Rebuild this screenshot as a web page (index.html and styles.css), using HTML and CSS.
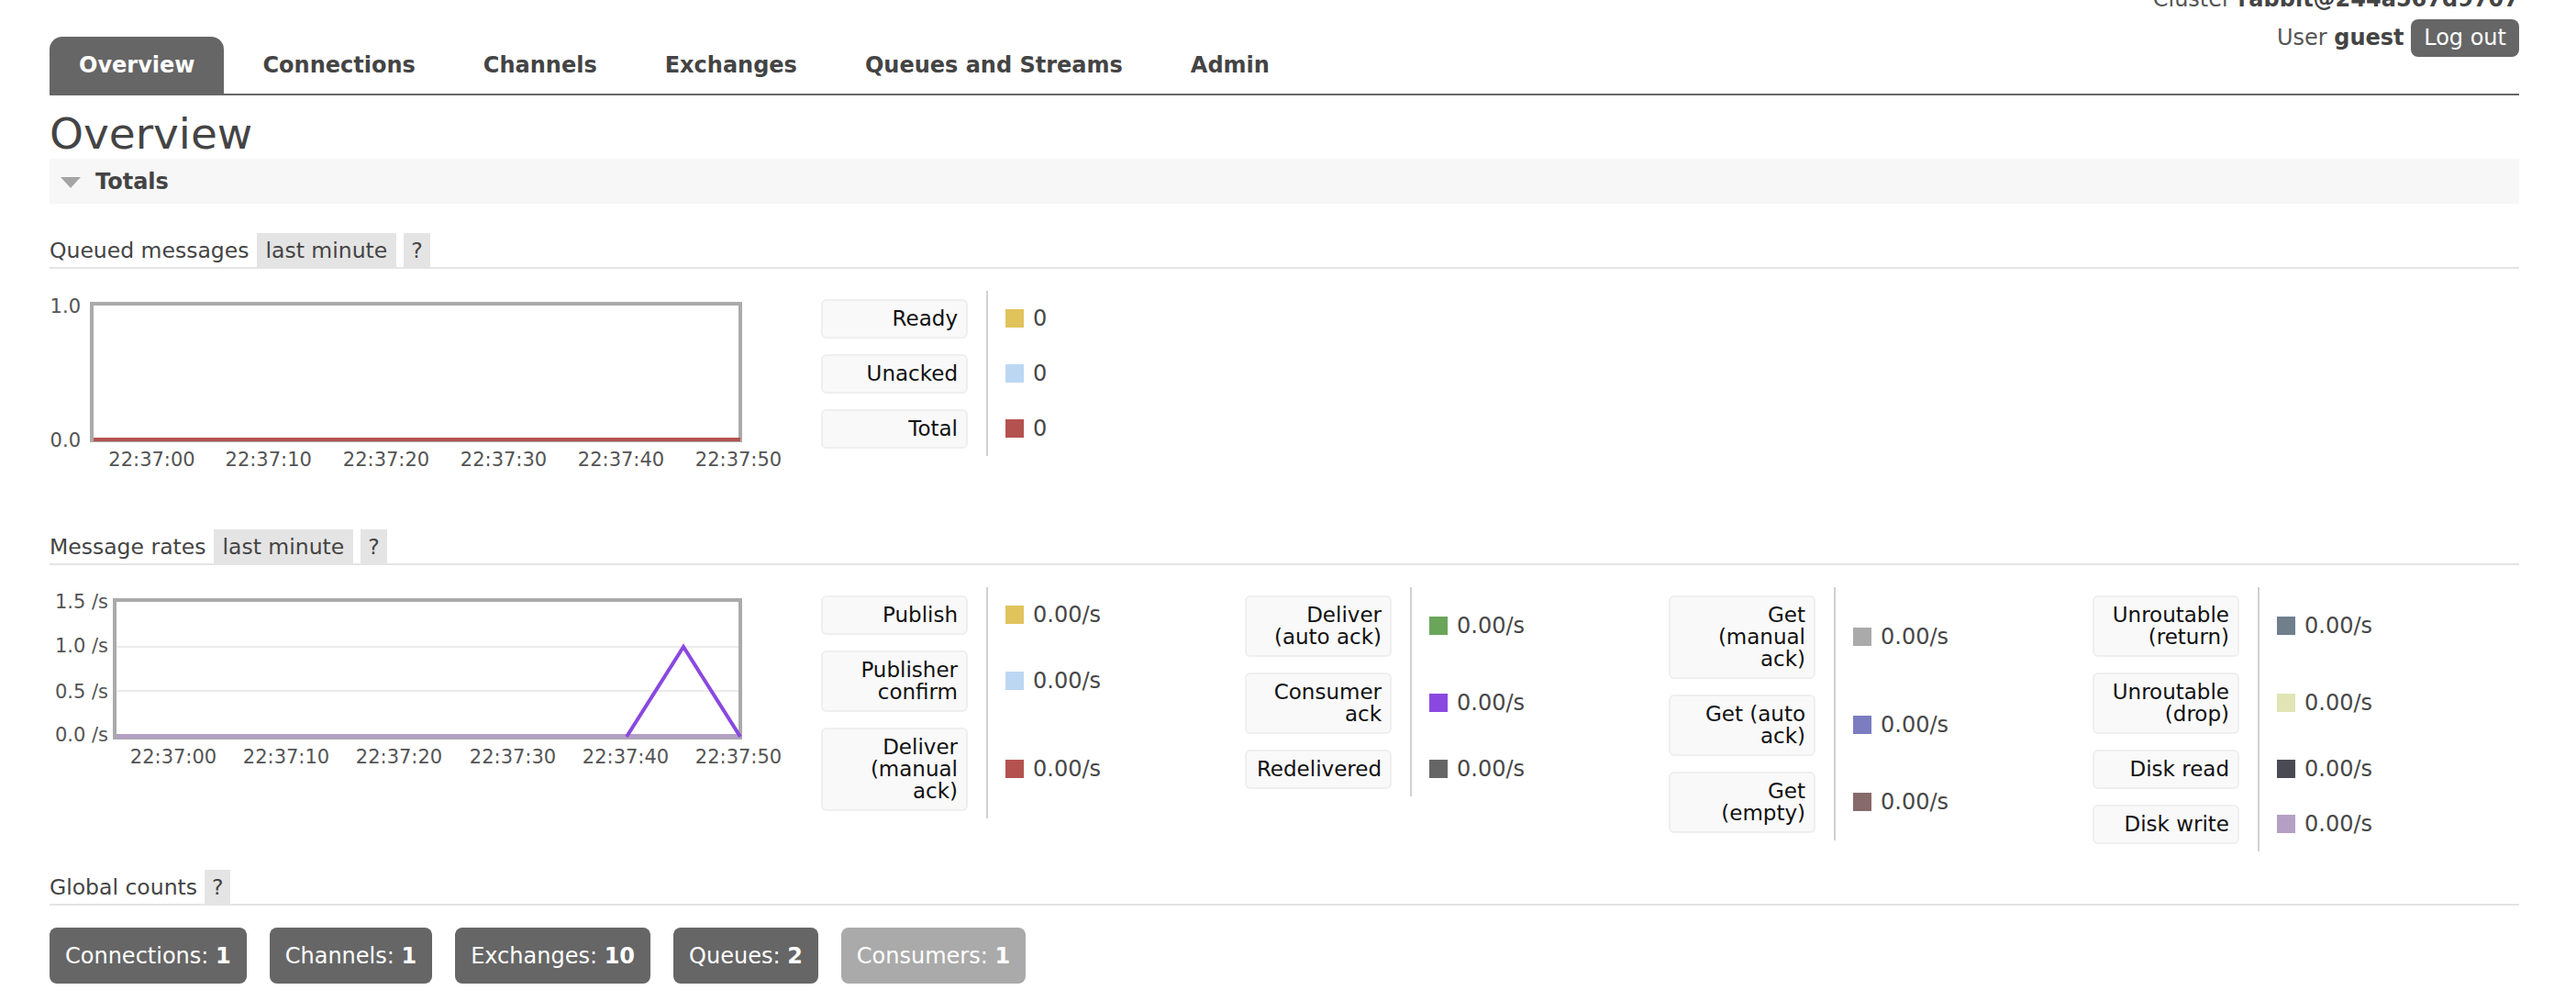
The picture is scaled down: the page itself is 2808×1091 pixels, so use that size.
FILE: index.html
```html
<!DOCTYPE html>
<html lang="en">
<head>
<meta charset="utf-8">
<title>RabbitMQ Management: Overview</title>
<link rel="stylesheet" href="styles.css">
</head>
<body>
<div class="page">
  <div class="login">
    <div class="cluster">Cluster <b>rabbit@244a567d9707</b></div>
    <div class="user">User <b>guest</b> <span class="logout">Log out</span></div>
  </div>

  <nav class="menu">
    <a class="tab active">Overview</a>
    <a class="tab">Connections</a>
    <a class="tab">Channels</a>
    <a class="tab">Exchanges</a>
    <a class="tab">Queues and Streams</a>
    <a class="tab">Admin</a>
  </nav>

  <h1 class="title">Overview</h1>

  <div class="section-bar"><span class="tri"></span>Totals</div>

  <div class="sec-h"><span class="t">Queued messages</span><span class="tag">last minute</span><span class="help">?</span></div>
  <div class="chart-row">
    <svg class="chart" width="841" height="240" viewBox="0 0 841 240">
      <g class="ylab">
        <text x="34" y="24">1.0</text>
        <text x="34" y="170">0.0</text>
      </g>
      <rect x="46" y="14" width="707" height="149" fill="#fff" stroke="#aaa" stroke-width="4"/>
      <line x1="48" y1="162" x2="753" y2="162" stroke="#b4524f" stroke-width="4"/>
      <g class="xlab">
        <text x="111.5" y="191">22:37:00</text>
        <text x="238.7" y="191">22:37:10</text>
        <text x="367" y="191">22:37:20</text>
        <text x="495" y="191">22:37:30</text>
        <text x="623" y="191">22:37:40</text>
        <text x="751" y="191">22:37:50</text>
      </g>
    </svg>
    <div class="legends">
      <div class="legend">
        <div class="lk"><div class="lbox">Ready</div></div>
        <div class="lv"><span class="sw c-yellow"></span>0</div>
        <div class="lk"><div class="lbox">Unacked</div></div>
        <div class="lv"><span class="sw c-lblue"></span>0</div>
        <div class="lk"><div class="lbox">Total</div></div>
        <div class="lv"><span class="sw c-red"></span>0</div>
      </div>
    </div>
  </div>

  <div class="sec-h"><span class="t">Message rates</span><span class="tag">last minute</span><span class="help">?</span></div>
  <div class="chart-row">
    <svg class="chart" width="841" height="240" viewBox="0 0 841 240">
      <g class="ylab">
        <text x="64" y="23">1.5 /s</text>
        <text x="64" y="71">1.0 /s</text>
        <text x="64" y="121">0.5 /s</text>
        <text x="64" y="168">0.0 /s</text>
      </g>
      <rect x="71" y="14" width="682" height="150" fill="#fff" stroke="#aaa" stroke-width="4"/>
      <line x1="73" y1="65" x2="751" y2="65" stroke="#ebebeb" stroke-width="2"/>
      <line x1="73" y1="113" x2="751" y2="113" stroke="#ebebeb" stroke-width="2"/>
      <line x1="73" y1="162.5" x2="753" y2="162.5" stroke="#b3a0c3" stroke-width="5"/>
      <polyline points="629,163 691,65 753,163" fill="none" stroke="#8a48e0" stroke-width="4"/>
      <g class="xlab">
        <text x="135" y="192">22:37:00</text>
        <text x="258" y="192">22:37:10</text>
        <text x="381" y="192">22:37:20</text>
        <text x="505" y="192">22:37:30</text>
        <text x="628" y="192">22:37:40</text>
        <text x="751" y="192">22:37:50</text>
      </g>
    </svg>
    <div class="legends">
      <div class="legend">
        <div class="lk"><div class="lbox">Publish</div></div>
        <div class="lv"><span class="sw c-yellow"></span>0.00/s</div>
        <div class="lk"><div class="lbox">Publisher confirm</div></div>
        <div class="lv"><span class="sw c-lblue"></span>0.00/s</div>
        <div class="lk"><div class="lbox">Deliver (manual ack)</div></div>
        <div class="lv"><span class="sw c-red"></span>0.00/s</div>
      </div>
      <div class="legend">
        <div class="lk"><div class="lbox">Deliver (auto ack)</div></div>
        <div class="lv"><span class="sw c-green"></span>0.00/s</div>
        <div class="lk"><div class="lbox">Consumer ack</div></div>
        <div class="lv"><span class="sw c-purple"></span>0.00/s</div>
        <div class="lk"><div class="lbox">Redelivered</div></div>
        <div class="lv"><span class="sw c-grey"></span>0.00/s</div>
      </div>
      <div class="legend">
        <div class="lk"><div class="lbox">Get (manual ack)</div></div>
        <div class="lv"><span class="sw c-lgrey"></span>0.00/s</div>
        <div class="lk"><div class="lbox">Get (auto ack)</div></div>
        <div class="lv"><span class="sw c-indigo"></span>0.00/s</div>
        <div class="lk"><div class="lbox">Get (empty)</div></div>
        <div class="lv"><span class="sw c-brown"></span>0.00/s</div>
      </div>
      <div class="legend">
        <div class="lk"><div class="lbox">Unroutable (return)</div></div>
        <div class="lv"><span class="sw c-slate"></span>0.00/s</div>
        <div class="lk"><div class="lbox">Unroutable (drop)</div></div>
        <div class="lv"><span class="sw c-khaki"></span>0.00/s</div>
        <div class="lk"><div class="lbox">Disk read</div></div>
        <div class="lv"><span class="sw c-dark"></span>0.00/s</div>
        <div class="lk"><div class="lbox">Disk write</div></div>
        <div class="lv"><span class="sw c-lilac"></span>0.00/s</div>
      </div>
    </div>
  </div>

  <div class="sec-h"><span class="t">Global counts</span><span class="help">?</span></div>
  <div class="counts">
    <span class="count">Connections: <b>1</b></span>
    <span class="count">Channels: <b>1</b></span>
    <span class="count">Exchanges: <b>10</b></span>
    <span class="count">Queues: <b>2</b></span>
    <span class="count light">Consumers: <b>1</b></span>
  </div>
</div>
</body>
</html>
```

FILE: styles.css
```css
html, body {
  margin: 0;
  padding: 0;
  background: #fff;
}

body {
  font-family: "DejaVu Sans", Verdana, sans-serif;
  font-size: 24px;
  color: #484848;
}

.page {
  position: relative;
  padding: 40px 62px 0 54px;
}

/* login info, top right */
.login {
  position: absolute;
  top: -15px;
  right: 62px;
  text-align: right;
  color: #555;
}

.cluster {
  line-height: 28px;
}

.cluster b,
.user b {
  color: #444;
}

.user {
  margin-top: 8px;
  height: 41px;
  line-height: 41px;
}

.logout {
  display: inline-block;
  vertical-align: top;
  background: #666;
  color: #fff;
  border-radius: 8px;
  padding: 0 14px;
  height: 41px;
  line-height: 41px;
}

/* menu */
.menu {
  display: flex;
  border-bottom: 2px solid #666;
}

.tab {
  display: block;
  padding: 17px 32px;
  line-height: 28px;
  font-weight: bold;
  color: #444;
  margin-right: 10px;
  border-radius: 14px 14px 0 0;
}

.tab.active {
  background: #666;
  color: #fff;
}

.title {
  margin: 14px 0 0;
  font-size: 47px;
  font-weight: normal;
  line-height: normal;
  color: #444;
}

.section-bar {
  background: #f7f7f7;
  padding: 11px 0 10px 12px;
  line-height: 28px;
  font-weight: bold;
  color: #444;
  display: flex;
  align-items: center;
  margin-bottom: 32px;
}

.tri {
  width: 0;
  height: 0;
  border-left: 11.5px solid transparent;
  border-right: 11.5px solid transparent;
  border-top: 12px solid #a4a4a4;
  margin-right: 16px;
  margin-top: 1px;
}

/* section headers */
.sec-h {
  display: flex;
  align-items: flex-end;
  border-bottom: 2px solid #e4e4e4;
  font-size: 23.5px;
  color: #444;
}

.sec-h > span {
  line-height: 27px;
  padding-top: 6px;
  padding-bottom: 4px;
}

.sec-h .tag {
  background: #e4e4e4;
  margin-left: 9px;
  padding-left: 9px;
  padding-right: 10px;
}

.sec-h .help {
  background: #e4e4e4;
  margin-left: 8px;
  padding-left: 8px;
  padding-right: 8px;
}

/* chart rows */
.chart-row {
  display: flex;
  align-items: flex-start;
  margin: 24px 0 20px;
}

.chart {
  display: block;
  flex-shrink: 0;
}

.chart text {
  font-family: "DejaVu Sans", Verdana, sans-serif;
  font-size: 21px;
  fill: #545454;
}

.chart .ylab text {
  text-anchor: end;
}

.chart .xlab text {
  text-anchor: middle;
}

.legends {
  display: flex;
}

.legend {
  width: 462px;
  display: grid;
  grid-template-columns: 180px 1fr;
  align-content: start;
}

.lk {
  padding: 8.5px 20px 8.5px 0;
}

.lbox {
  box-sizing: border-box;
  width: 160px;
  background: #f9f9f9;
  border: 2px solid #efefef;
  border-radius: 6px;
  padding: 7.5px 9px 7.5px 7px;
  line-height: 24px;
  font-size: 23px;
  text-align: right;
  color: #111;
}

.lv {
  border-left: 2px solid #d0d0d0;
  padding-left: 19px;
  display: flex;
  align-items: center;
  gap: 10px;
  color: #484848;
}

.sw {
  width: 20px;
  height: 20px;
  flex-shrink: 0;
}

.c-yellow { background: #e0c35c; }
.c-lblue { background: #bcd7f3; }
.c-red { background: #b4524f; }
.c-green { background: #6aa55a; }
.c-purple { background: #8a48e0; }
.c-grey { background: #666; }
.c-lgrey { background: #aaa; }
.c-indigo { background: #7c7dc0; }
.c-brown { background: #876a6a; }
.c-slate { background: #6f7f8c; }
.c-khaki { background: #e1e4b5; }
.c-dark { background: #4a4a55; }
.c-lilac { background: #b5a0c5; }

/* global counts */
.counts {
  display: flex;
  gap: 25px;
  margin-top: 24px;
}

.count {
  background: #666;
  color: #fff;
  font-size: 24px;
  line-height: 28px;
  padding: 16.5px 17px;
  border-radius: 8px;
}

.count.light {
  background: #aaa;
}
```
